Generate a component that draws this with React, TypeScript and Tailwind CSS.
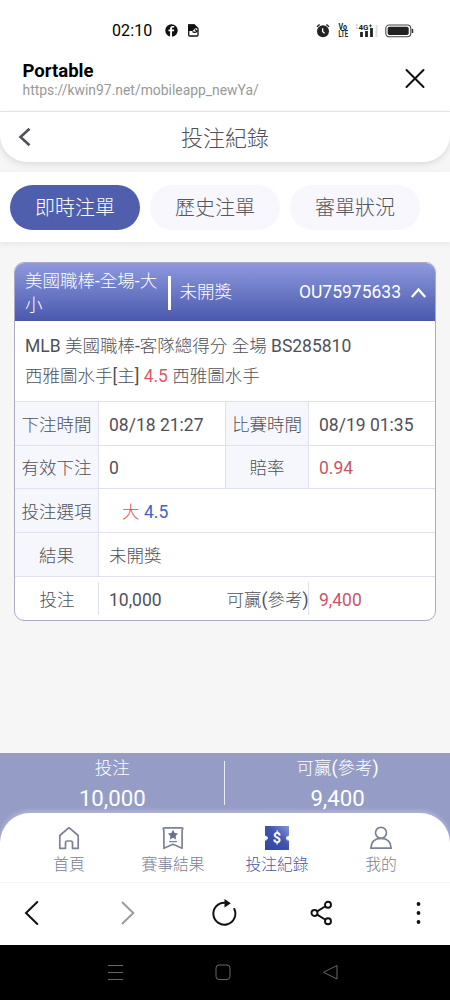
import type { ReactNode } from 'react';

/* Latin stays at the regular weight while Han characters are drawn light. */
function T({ children, className = '' }: { children: string; className?: string }) {
  return (
    <span className={className}>
      {children.split(/([\u4e00-\u9fff]+)/).map((part, i) =>
        i % 2 === 1 ? (
          <span key={i} className="font-light">{part}</span>
        ) : (
          part
        )
      )}
    </span>
  );
}

function StatusBar() {
  return (
    <div className="flex h-[52px] items-center pt-[9px] text-[#111]">
      <span className="ml-28 w-10 text-[16px] leading-5 tracking-[0.1px] text-black">02:10</span>
      <svg className="ml-[13px]" width="13" height="13" viewBox="0 0 13 13">
        <circle cx="6.5" cy="6.5" r="6.2" fill="#111" />
        <path d="M7 13V7.3h1.9l.3-1.8H7V4.6c0-.7.4-1 1-1h1.2V2.1C8.800 2 8.300 2 7.700 2 6 2 5.100 3 5.100 4.600v.9H3.500v1.800h1.600V13z" fill="#fff" />
      </svg>
      <svg className="ml-[10px]" width="11" height="13" viewBox="0 0 11 13">
        <path d="M.7 1h5.600l3.700 3.500v6.500c0 .6-.4 1-1 1H1.700c-.6 0-1-.4-1-1z" fill="#fff" stroke="#111" strokeWidth="1.300" />
        <path d="M0 .5h6.500L9.500 4 7 4.500 4.500 7 0 7z" fill="#111" />
        <path d="M4.500 7.500c1.500 1.500 4 1 5-1M7 5.500l1.500 1.500" fill="none" stroke="#111" strokeWidth="1.200" />
      </svg>
      <svg className="ml-[117px]" width="14" height="15" viewBox="0 0 14 15">
        <circle cx="7" cy="8.200" r="6" fill="#222" />
        <path d="M1 3.800 3.600 1.500M13 3.800 10.400 1.500" stroke="#222" strokeWidth="1.400" />
        <path d="M6.600 5.200v3.300l2 1.800" stroke="#fff" strokeWidth="1.300" fill="none" />
      </svg>
      <svg className="ml-[7px]" width="12" height="19" viewBox="0 0 12 19" fontFamily="Roboto" fontSize="8.800" fontWeight="700" fill="#222">
        <text x="1.500" y="8.800" textLength="8.500" lengthAdjust="spacingAndGlyphs">Vo</text>
        <text x="1.500" y="15.600" textLength="9.500" lengthAdjust="spacingAndGlyphs">LTE</text>
      </svg>
      <svg className="ml-[5px]" width="27" height="15" viewBox="0 0 27 15">
        <path d="M2 2h1.500M2 5h1.500" stroke="#999" strokeWidth="1" />
        <text x="4.500" y="6.800" fontSize="8" fontWeight="700" fill="#222" fontFamily="Roboto">4G</text>
        <path d="M15 2.800h3M16.500 1.300v3" stroke="#222" strokeWidth=".8" />
        <path d="M7.500 9v5M12.500 8v6M17.500 5v9" stroke="#222" strokeWidth="2.800" />
        <path d="M22.500 2v12" stroke="#ddd" strokeWidth="2" />
      </svg>
      <svg className="ml-[4px]" width="29" height="14" viewBox="0 0 29 14">
        <rect x=".8" y="1" width="25" height="11.800" rx="3.500" fill="none" stroke="#444" strokeWidth="1.100" />
        <rect x="2.700" y="2.800" width="21" height="8.200" rx="1.800" fill="#222" />
        <path d="M27.500 4.800v4.200" stroke="#333" strokeWidth="1.500" />
      </svg>
    </div>
  );
}

function SiteHeader() {
  return (
    <div className="flex h-[60px] items-start justify-between border-b border-[#ebebeb] pl-[22.5px] pr-[24px]">
      <div>
        <div className="mt-[7px] text-[18.500px] font-bold leading-[24px] text-black">Portable</div>
        <div className="text-[13.900px] leading-[15px] text-[#999]">https://kwin97.net/mobileapp_newYa/</div>
      </div>
      <svg className="mt-[16px]" width="22" height="22" viewBox="0 0 22 22">
        <path d="m2.500 2 17 17M19.500 2l-17 17" stroke="#111" strokeWidth="2" strokeLinecap="round" />
      </svg>
    </div>
  );
}

function Label({ children, plain }: { children: string; plain?: boolean }) {
  return (
    <div className={plain ? 'flex items-center justify-center whitespace-nowrap pt-[3px]' : 'flex items-center justify-center whitespace-nowrap border-r border-[#dfe1f1] bg-[#f6f7fd] pt-[3px]'}>
      <T>{children}</T>
    </div>
  );
}

function Value({ children, className = '' }: { children: ReactNode; className?: string }) {
  return <div className={'flex items-center pl-[10px] pt-[3px] ' + className}>{children}</div>;
}

function BetCard() {
  return (
    <div className="mx-[14px] mt-5 h-[359px] overflow-hidden rounded-[10px] border-[1.500px] border-[#aaaac4] bg-white text-[17.500px] text-[#505157]">
      <div className="-mx-px -mt-px flex h-[59px] items-center border-b border-[#5057a2] bg-linear-to-b from-[#909ade] to-[#4b5aae] pl-[11px] pr-[9px] pt-[3px] text-white">
        <T className="w-[143px] leading-[24px]">美國職棒-全場-大小</T>
        <div className="h-[34px] w-[2.500px] bg-white" />
        <T className="ml-[9px]">未開獎</T>
        <span className="ml-auto">OU75975633</span>
        <svg className="ml-[9px]" width="17" height="12" viewBox="0 0 17 12">
          <path d="m1.800 10 6.700-7.500L15.200 10" fill="none" stroke="#fff" strokeWidth="2.200" />
        </svg>
      </div>
      <div className="flex h-[81px] flex-col justify-center border-b border-[#dfe1f1] pl-[10px] leading-[30px]">
        <T>MLB 美國職棒-客隊總得分 全場 BS285810</T>
        <div>
          <T>西雅圖水手[主] </T>
          <span className="text-[#d65b66]">4.5</span>
          <T> 西雅圖水手</T>
        </div>
      </div>
      <div className="grid grid-cols-[84px_127px_83px_1fr] grid-rows-[repeat(5,43.700px)]">
        <div className="col-span-4 grid grid-cols-subgrid border-b border-[#dfe1f1]">
          <Label>下注時間</Label>
          <Value className="border-r border-[#dfe1f1]">08/18 21:27</Value>
          <Label>比賽時間</Label>
          <Value>08/19 01:35</Value>
        </div>
        <div className="col-span-4 grid grid-cols-subgrid border-b border-[#dfe1f1]">
          <Label>有效下注</Label>
          <Value className="border-r border-[#dfe1f1]">0</Value>
          <Label>賠率</Label>
          <Value className="text-[#c95569]">0.94</Value>
        </div>
        <div className="col-span-4 grid grid-cols-subgrid border-b border-[#dfe1f1]">
          <Label>投注選項</Label>
          <Value className="col-span-3">
            <T className="ml-[13px] text-[#df4d50]">大</T>
            <span className="ml-[4.500px] text-[#4662c9]">4.5</span>
          </Value>
        </div>
        <div className="col-span-4 grid grid-cols-subgrid border-b border-[#dfe1f1]">
          <Label>結果</Label>
          <Value className="col-span-3"><T>未開獎</T></Value>
        </div>
        <div className="col-span-4 grid grid-cols-subgrid py-[5px]">
          <Label plain>投注</Label>
          <Value className="-ml-px border-l border-[#dfe1f1]">10,000</Value>
          <Label plain>可贏(參考)</Label>
          <Value className="-ml-px border-l border-[#dfe1f1] text-[#c95569]">9,400</Value>
        </div>
      </div>
    </div>
  );
}

function HomeIcon() {
  return (
    <svg width="24" height="24" viewBox="0 0 24 24" fill="none" stroke="#7b8294" strokeWidth="1.700" strokeLinejoin="round">
      <path d="M2.800 9.500 12 1.700l9.200 7.800v12.800h-5.700v-5.500c0-1.200-.6-1.800-1.700-1.800h-3.600c-1.100 0-1.700.6-1.700 1.800v5.500H2.800z" />
    </svg>
  );
}

function ResultIcon() {
  return (
    <svg width="24" height="24" viewBox="0 0 24 24" fill="none" stroke="#7b8294" strokeWidth="1.700" strokeLinejoin="round">
      <path d="M3.200 1.800h17.600c.9 0 1.200.7.800 1.400-.3.500-.5.900-.5 1.800v17.300L12 18.300l-9.100 4V5c0-.9-.2-1.300-.5-1.800-.4-.7-.1-1.400.8-1.400z" />
      <path d="m12 3.800 1.600 3.200 3.500.5-2.500 2.500.6 3.500-3.200-1.700-3.200 1.700.6-3.500-2.500-2.500 3.500-.5z" fill="#68718f" stroke="none" />
      <path d="M8 15.600h8" strokeWidth="1.300" />
    </svg>
  );
}

function TicketIcon() {
  return (
    <svg width="24" height="24" viewBox="0 0 24 24">
      <defs>
        <linearGradient id="ticket" x1="0" y1="1" x2="1" y2="0">
          <stop offset="0" stopColor="#30479f" />
          <stop offset=".55" stopColor="#4054ac" />
          <stop offset="1" stopColor="#8795df" />
        </linearGradient>
      </defs>
      <path d="M0 0h24v9.800h-1.500v1h-1.300v2.600h1.300v1.200H24V24H0v-9.500h1.500v-1.200h1.300v-2.600H1.500V9.800H0z" fill="url(#ticket)" />
      <text x="12" y="17" textAnchor="middle" fontFamily="Roboto" fontSize="14.500" fontWeight="700" fill="#fff">$</text>
    </svg>
  );
}

function UserIcon() {
  return (
    <svg width="24" height="24" viewBox="0 0 24 24" fill="none" stroke="#7b8294" strokeWidth="1.700" strokeLinejoin="round">
      <circle cx="12" cy="6.800" r="5.500" />
      <path d="M1.800 22.200c.3-5.700 3.500-9.800 10.200-9.800s9.900 4.100 10.200 9.800z" />
    </svg>
  );
}

function NavItem({ icon, label, active }: { icon: ReactNode; label: string; active?: boolean }) {
  return (
    <div className={active ? 'flex w-[104px] flex-col items-center text-[#485aa8]' : 'flex w-[104px] flex-col items-center text-[#7b8091]'}>
      {icon}
      <T className="mt-[4px] text-[15.800px] leading-[22px]">{label}</T>
    </div>
  );
}

function Totals() {
  return (
    <div className="flex h-[60px] bg-[#959dc6] text-white">
      <div className="flex w-[223.500px] flex-col items-center pl-px">
        <T className="mt-[2px] text-[17.500px] leading-[27px]">投注</T>
        <span className="text-[22.200px] leading-[32px]">10,000</span>
      </div>
      <div className="mt-[8px] h-[44px] w-[1.500px] bg-[#e9ebf6]" />
      <div className="flex flex-1 flex-col items-center">
        <T className="mt-[2px] text-[17.500px] leading-[27px]">可贏(參考)</T>
        <span className="text-[22.200px] leading-[32px]">9,400</span>
      </div>
    </div>
  );
}

function BrowserBar() {
  return (
    <div className="flex h-[62px] items-center justify-between bg-white pb-[2px] pl-[18px] pr-[18px]">
      <svg width="28" height="28" viewBox="0 0 28 28"><path d="M19.300 3 8 14l11.300 11" fill="none" stroke="#111" strokeWidth="2" strokeLinecap="round" /></svg>
      <svg width="28" height="28" viewBox="0 0 28 28"><path d="m7 3 11.300 11L7 25" fill="none" stroke="#999" strokeWidth="1.900" /></svg>
      <svg width="28" height="28" viewBox="0 0 28 28">
        <path d="M13.500 3.700A11 11 0 1 0 23.300 10" fill="none" stroke="#111" strokeWidth="2" strokeLinecap="round" />
        <path d="m13.500 0 6.300 4.200-6.300 4.300z" fill="#111" />
      </svg>
      <svg width="28" height="28" viewBox="0 0 28 28" fill="none" stroke="#111" strokeWidth="1.900">
        <circle cx="6.500" cy="14" r="3" /><circle cx="20" cy="5.700" r="3" /><circle cx="20" cy="22.300" r="3" />
        <path d="m9.200 12.400 8.200-5.100M9.200 15.600l8.200 5.100" />
      </svg>
      <svg width="28" height="28" viewBox="0 0 28 28" fill="#111">
        <circle cx="14.500" cy="5" r="1.900" /><circle cx="14.500" cy="14" r="1.900" /><circle cx="14.500" cy="23" r="1.900" />
      </svg>
    </div>
  );
}

export default function App() {
  return (
    <div className="flex h-[1000px] w-[450px] flex-col overflow-hidden bg-[#f6f6f7] font-[Roboto,'Noto_Sans_CJK_TC',sans-serif]">
      <div className="bg-white">
        <StatusBar />
        <SiteHeader />
      </div>
      <header className="flex h-[50px] items-center rounded-b-[27px] bg-white text-[22px] text-[#505157] shadow-[0_2px_7px_rgba(0,0,0,0.12)]">
        <svg className="ml-[18px]" width="14" height="20" viewBox="0 0 14 20">
          <path d="m11.500 1.700-9 8.300 9 8.300" fill="none" stroke="#515258" strokeWidth="2.600" />
        </svg>
        <T className="flex-1 pr-8 pt-[3px] text-center">投注紀錄</T>
      </header>
      <div className="mt-[10px] flex h-[70px] items-center gap-[10px] bg-white px-[10px] text-[20px] text-[#55565c] shadow-[0_2px_6px_rgba(0,0,0,0.07)]">
        <button className="h-[45px] w-[130px] rounded-full bg-[#505eae] pt-[2px] text-white"><T>即時注單</T></button>
        <button className="h-[45px] w-[130px] rounded-full bg-[#f7f7fd] pt-[2px]"><T>歷史注單</T></button>
        <button className="h-[45px] w-[130px] rounded-full bg-[#f7f7fd] pt-[2px]"><T>審單狀況</T></button>
      </div>
      <main className="flex-1">
        <BetCard />
      </main>
      <Totals />
      <div className="bg-[#959dc6]">
        <nav className="flex h-[70px] justify-center rounded-t-[30px] border-b-[1.500px] border-[#f4f4f5] bg-white pt-[13px] shadow-[0_-2px_5px_rgba(255,255,255,0.3)]">
          <NavItem icon={<HomeIcon />} label="首頁" />
          <NavItem icon={<ResultIcon />} label="賽事結果" />
          <NavItem icon={<TicketIcon />} label="投注紀錄" active />
          <NavItem icon={<UserIcon />} label="我的" />
        </nav>
      </div>
      <BrowserBar />
      <div className="flex h-[55px] items-center bg-black">
        <svg className="ml-[107px]" width="17" height="17" viewBox="0 0 17 17"><path d="M1 1.500h15M1 8.500h15M1 15.500h15" stroke="#686868" /></svg>
        <svg className="ml-[91px]" width="17" height="17" viewBox="0 0 17 17"><rect x="1" y="1" width="14" height="14.500" rx="3" fill="none" stroke="#686868" /></svg>
        <svg className="ml-[90px]" width="17" height="17" viewBox="0 0 17 17"><path d="M15 1.500v13.500L1.500 8.300z" fill="none" stroke="#686868" strokeLinejoin="round" /></svg>
      </div>
    </div>
  );
}
